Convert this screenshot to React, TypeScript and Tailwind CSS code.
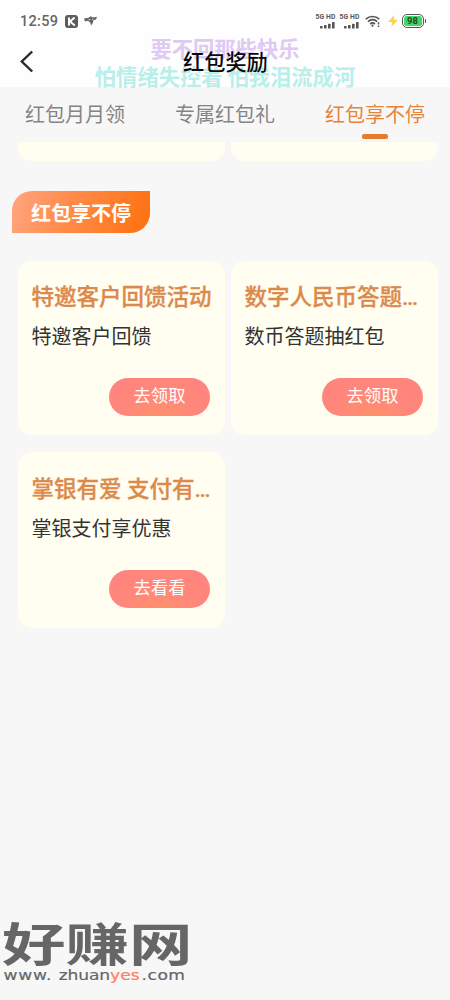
import React from 'react';

type Offer = { title: string; desc: string; action: string };

const offers: Offer[] = [
  { title: '特邀客户回馈活动', desc: '特邀客户回馈', action: '去领取' },
  { title: '数字人民币答题…', desc: '数币答题抽红包', action: '去领取' },
  { title: '掌银有爱 支付有…', desc: '掌银支付享优惠', action: '去看看' },
];

function Signal() {
  return (
    <div className="flex w-[21px] flex-col items-end">
      <span className="whitespace-nowrap font-['Roboto',sans-serif] text-[6.8px] font-bold leading-[8px] tracking-[0.1px] text-[#555]">5G HD</span>
      <svg width="16" height="7" viewBox="0 0 16 7" fill="#555" className="mt-px">
        <rect x="0" y="4" width="2.6" height="2.5" rx=".6" />
        <rect x="4" y="3" width="2.6" height="3.5" rx=".6" />
        <rect x="8" y="1.7" width="2.6" height="4.8" rx=".6" />
        <rect x="12" y="0" width="2.6" height="6.5" rx=".6" />
      </svg>
    </div>
  );
}

function StatusBar() {
  return (
    <div className="flex h-[42px] items-center pl-5 pr-6">
      <span className="mt-[2px] w-[40px] font-['Roboto',sans-serif] text-[14.5px] font-medium leading-5 tracking-[0.3px] text-[#666]">12:59</span>
      <svg width="13" height="13" viewBox="0 0 13 13" className="ml-[5px]">
        <rect width="13" height="13" rx="3" fill="#5c5c5c" />
        <path d="M4 2.5v8M9.6 2.5 5 6.5l4.8 4" fill="none" stroke="#fff" strokeWidth="2" />
      </svg>
      <svg width="14" height="12" viewBox="0 0 14 12" className="ml-[6px]">
        <path d="M0 3.6 4.6 2.8 6.6 1.2 8.8 2.4 13 1.8 12 4.6 9.4 5.2 8.8 8 7 10.6 6.2 7.4 4 5.8 1 6.4Z" fill="#666" />
        <path d="m4.4 4.8 2-.5M8 4.6l1.3-.5" stroke="#fff" strokeWidth=".7" />
      </svg>
      <div className="ml-auto flex items-center">
        <div className="flex gap-[3px]">
          <Signal />
          <Signal />
        </div>
        <svg width="16" height="13" viewBox="0 0 16 13" className="ml-[5px]" fill="none" stroke="#555" strokeWidth="1.7">
          <path d="M.8 4.2c4-3.6 9.5-3.6 13.5 0M3 6.7c3-2.6 6.2-2.6 9.2 0M5.2 9c1.6-1.4 3.1-1.4 4.7 0" />
          <circle cx="7.5" cy="10.7" r="1.1" fill="#555" stroke="none" />
          <path d="M13.5 7.3v2.2M13.5 10.6v1.5" strokeWidth="1.5" />
        </svg>
        <svg width="10" height="12" viewBox="0 0 10 12" className="ml-[7px]">
          <path d="M6.2 0 0 7h4L3.4 12 10 4.8H5.8Z" fill="#fbd34f" />
        </svg>
        <div className="ml-[4px] flex h-[14px] w-[22px] items-center rounded-[5px] border-[1.5px] border-[#555] p-px">
          <div className="flex h-full w-full items-center justify-center rounded-[2.5px] bg-[#43d568] font-['Roboto',sans-serif] text-[9.5px] font-bold leading-none text-[#24472c]">98</div>
        </div>
        <div className="ml-px h-[4px] w-[1.5px] rounded bg-[#555]" />
      </div>
    </div>
  );
}

function OfferCard({ offer, tall }: { offer: Offer; tall: boolean }) {
  return (
    <article className={`flex flex-col rounded-[14px] bg-[#fffef1] pl-[13.5px] pr-[12px] ${tall ? 'h-[176px] pt-[20px]' : 'h-[174px] pt-[19px]'}`}>
      <h3 className="whitespace-nowrap font-['Roboto','Noto_Sans_CJK_SC',sans-serif] text-[22.5px] font-medium leading-[34px] text-[#dc8a4b] [-webkit-text-stroke:0.3px_#dc8a4b]">{offer.title}</h3>
      <p className="mt-[7px] text-[20px] leading-[30px] text-[#333]">{offer.desc}</p>
      <button className={`ml-auto mr-[3px] flex h-[38px] w-[101px] justify-center rounded-full bg-[radial-gradient(ellipse_at_50%_110%,#ff916b_0%,#ff877a_50%,#ff837f_100%)] text-[17.3px] leading-[34px] text-white ${tall ? 'mt-[27px]' : 'mt-[27px]'}`}>
        {offer.action}
      </button>
    </article>
  );
}

export default function App() {
  return (
    <div className="relative flex h-[1000px] w-[450px] flex-col overflow-hidden bg-[#f7f7f7] font-['Noto_Sans_CJK_SC',sans-serif]">
      <header className="relative h-[87px] shrink-0 bg-[#fefefe]">
        <StatusBar />
        <div className="flex h-[37px] items-center">
          <svg width="16" height="24" viewBox="0 0 16 24" className="ml-[19px]" fill="none" stroke="#292929" strokeWidth="2.4">
            <path d="M13.2 2.5 2.8 12.5l10.4 10" />
          </svg>
          <h1 className="relative z-10 ml-[148px] text-[21.2px] font-medium leading-[36px] text-[#080808]">红包奖励</h1>
        </div>
        <div className="absolute left-0 top-[34px] w-full whitespace-nowrap text-center text-[21.3px] font-bold leading-[28px]">
          <p className="text-[#decaf3]">要不回那些快乐</p>
          <p className="text-[#b9efeb]">怕情绪失控着 怕我泪流成河</p>
        </div>
      </header>

      <nav className="grid h-[55px] shrink-0 grid-cols-3 text-center text-[20px] leading-[54px] text-[#858585]">
        <span>红包月月领</span>
        <span>专属红包礼</span>
        <span className="flex flex-col items-center text-[#e88339]">
          <span className="h-[47px]">红包享不停</span>
          <i className="h-[5px] w-[26px] rounded-[2px] bg-[#e67c30]" />
        </span>
      </nav>

      <main className="flex flex-col">
        <div className="grid grid-cols-2 gap-[6px] pl-[18px] pr-[12px]">
          <div className="h-[19px] rounded-b-[14px] bg-[#fffef1]" />
          <div className="h-[19px] rounded-b-[14px] bg-[#fffef1]" />
        </div>
        <h2 className="ml-[12px] mt-[30px] flex h-[42px] w-[138px] justify-center rounded-br-[20px] rounded-tl-[20px] bg-linear-[105deg,#ffa581_0%,#ff8c4b_40%,#ff700f_100%] text-[20px] font-bold leading-[44px] text-[#fffefa]">红包享不停</h2>
        <section className="mt-[28px] grid grid-cols-2 gap-x-[6px] gap-y-[17px] pl-[18px] pr-[12px]">
          {offers.map((offer, i) => (
            <OfferCard key={offer.title} offer={offer} tall={i === 2} />
          ))}
        </section>
      </main>

      <footer className="mt-auto h-[84px] w-[206px] text-[#666]">
        <div className="h-[51px] w-[145px] origin-left scale-x-[1.38] whitespace-nowrap pl-[1.5px] text-[46px] font-bold leading-[50px]">好赚网</div>
        <div className="flex h-[16px] w-[156px] origin-left scale-x-[1.18] whitespace-nowrap pl-[3px] font-['DejaVu_Sans',sans-serif] text-[14.5px] leading-[16px] [-webkit-text-stroke:0.2px]">
          <span className="w-[49px] tracking-[0.6px]">www.</span>
          <span className="w-[44px] tracking-[-0.1px]">zhuan</span>
          <span className="w-[28px] text-[#ff805f]">yes</span>
          <span className="w-[36px] tracking-[0.4px]">.com</span>
        </div>
      </footer>
    </div>
  );
}
